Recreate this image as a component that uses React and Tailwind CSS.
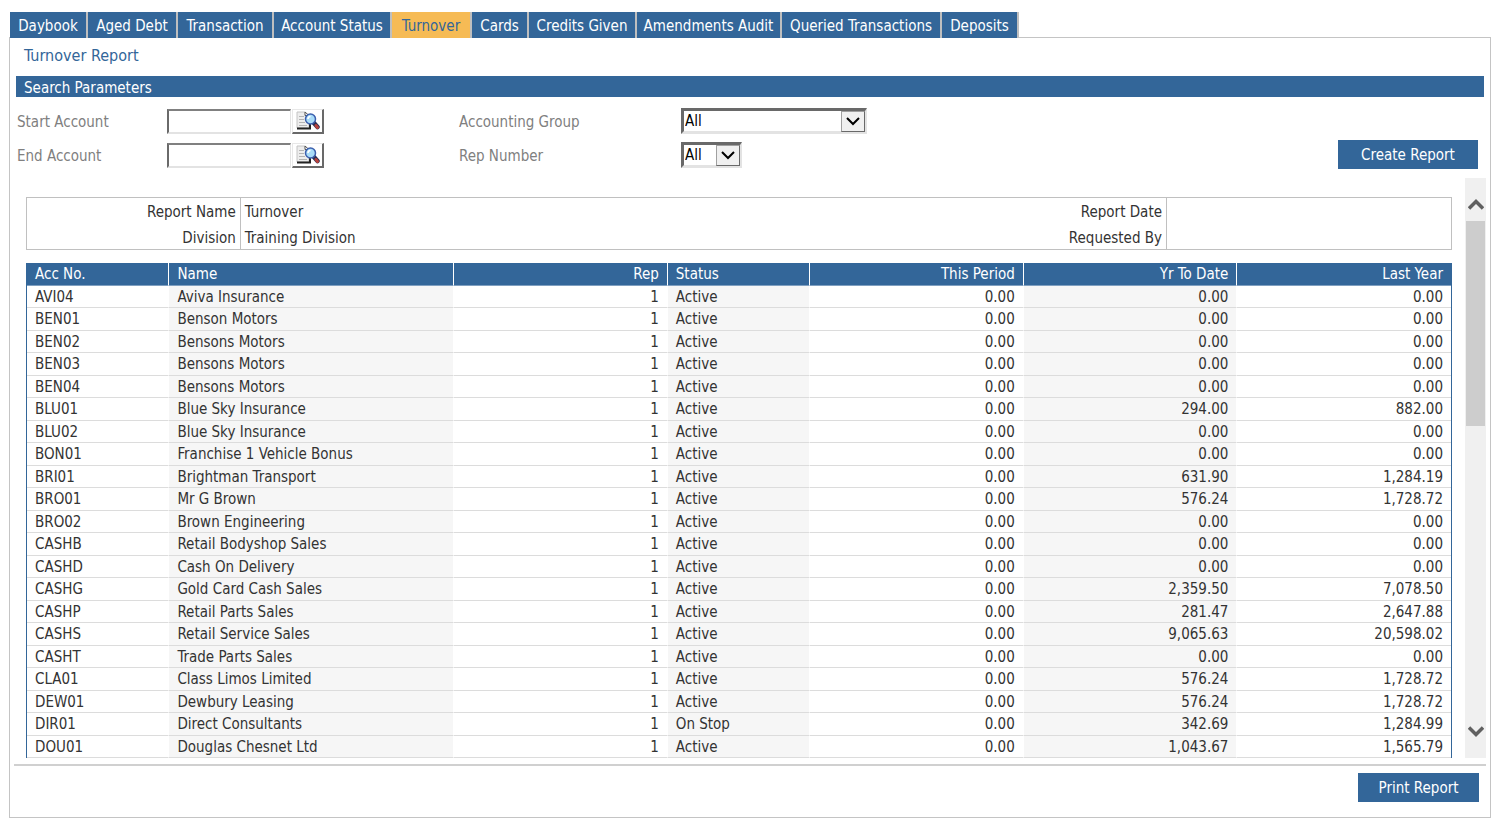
import React from 'react';

const tabs = [
  { label: 'Daybook', width: 'w-[78px]' },
  { label: 'Aged Debt', width: 'w-[90px]' },
  { label: 'Transaction', width: 'w-[96px]' },
  { label: 'Account Status', width: 'w-[118px]' },
  { label: 'Turnover', width: 'w-[80px]', active: true },
  { label: 'Cards', width: 'w-[57px]' },
  { label: 'Credits Given', width: 'w-[108px]' },
  { label: 'Amendments Audit', width: 'w-[145px]' },
  { label: 'Queried Transactions', width: 'w-[160px]' },
  { label: 'Deposits', width: 'w-[77px]' },
];

const columns = [
  { label: 'Acc No.', width: 'w-[10%]' },
  { label: 'Name', width: 'w-[20%]', shaded: true },
  { label: 'Rep', width: 'w-[15%]', numeric: true },
  { label: 'Status', width: 'w-[10%]', shaded: true },
  { label: 'This Period', width: 'w-[15%]', numeric: true },
  { label: 'Yr To Date', width: 'w-[15%]', numeric: true, shaded: true },
  { label: 'Last Year', width: 'w-[15%]', numeric: true },
];

const accounts = [
  ['AVI04', 'Aviva Insurance', '1', 'Active', '0.00', '0.00', '0.00'],
  ['BEN01', 'Benson Motors', '1', 'Active', '0.00', '0.00', '0.00'],
  ['BEN02', 'Bensons Motors', '1', 'Active', '0.00', '0.00', '0.00'],
  ['BEN03', 'Bensons Motors', '1', 'Active', '0.00', '0.00', '0.00'],
  ['BEN04', 'Bensons Motors', '1', 'Active', '0.00', '0.00', '0.00'],
  ['BLU01', 'Blue Sky Insurance', '1', 'Active', '0.00', '294.00', '882.00'],
  ['BLU02', 'Blue Sky Insurance', '1', 'Active', '0.00', '0.00', '0.00'],
  ['BON01', 'Franchise 1 Vehicle Bonus', '1', 'Active', '0.00', '0.00', '0.00'],
  ['BRI01', 'Brightman Transport', '1', 'Active', '0.00', '631.90', '1,284.19'],
  ['BRO01', 'Mr G Brown', '1', 'Active', '0.00', '576.24', '1,728.72'],
  ['BRO02', 'Brown Engineering', '1', 'Active', '0.00', '0.00', '0.00'],
  ['CASHB', 'Retail Bodyshop Sales', '1', 'Active', '0.00', '0.00', '0.00'],
  ['CASHD', 'Cash On Delivery', '1', 'Active', '0.00', '0.00', '0.00'],
  ['CASHG', 'Gold Card Cash Sales', '1', 'Active', '0.00', '2,359.50', '7,078.50'],
  ['CASHP', 'Retail Parts Sales', '1', 'Active', '0.00', '281.47', '2,647.88'],
  ['CASHS', 'Retail Service Sales', '1', 'Active', '0.00', '9,065.63', '20,598.02'],
  ['CASHT', 'Trade Parts Sales', '1', 'Active', '0.00', '0.00', '0.00'],
  ['CLA01', 'Class Limos Limited', '1', 'Active', '0.00', '576.24', '1,728.72'],
  ['DEW01', 'Dewbury Leasing', '1', 'Active', '0.00', '576.24', '1,728.72'],
  ['DIR01', 'Direct Consultants', '1', 'On Stop', '0.00', '342.69', '1,284.99'],
  ['DOU01', 'Douglas Chesnet Ltd', '1', 'Active', '0.00', '1,043.67', '1,565.79'],
];

const LookupIcon = () => (
  <svg width="24" height="20" viewBox="0 0 24 20" aria-hidden="true">
    <path d="M1 1H9L13 5V17H1Z" fill="#ededed" stroke="#c4c4c4" />
    <path d="M1 17.5H14V13" fill="none" stroke="#222" strokeWidth="2" />
    <path d="M9 1V4.5H13Z" fill="#fff" stroke="#555" />
    <path d="M3 5.5H8M3 8.5H8M3 11.5H9M3 14.5H11" stroke="#b4b4b4" />
    <path d="M17.5 11.5L21.5 16" stroke="#2b2f55" strokeWidth="4.5" strokeLinecap="round" />
    <path d="M20 14.5L21.5 16.5" stroke="#b8433c" strokeWidth="3" strokeLinecap="round" />
    <circle cx="14.5" cy="8" r="5" fill="#a9dcf8" stroke="#3c5fae" strokeWidth="1.5" />
    <path d="M12 8A2.5 2.5 0 0 1 14.5 5.5" fill="none" stroke="#fff" strokeWidth="1.5" />
  </svg>
);

const Chevron = ({ up }) => (
  <svg width="16" height="13" viewBox="0 0 16 13" aria-hidden="true">
    <path d={up ? 'M1 10.5L8 3.5L15 10.5' : 'M1 2.5L8 9.5L15 2.5'} fill="none" stroke="#606060" strokeWidth="3.5" />
  </svg>
);

const AccountField = ({ id, label }) => (
  <div className="flex items-center h-[34px]">
    <label htmlFor={id} className="w-[150px] pt-[2px] text-[#808080]">{label}</label>
    <input
      id={id}
      type="text"
      className="w-[124px] h-[25px] mr-px px-1 bg-white border-t-2 border-l-2 border-b-2 border-r border-t-[#808080] border-l-[#6a6a6a] border-b-[#e3e3e3] border-r-[#e3e3e3] outline-none"
    />
    <button
      type="button"
      aria-label={`Look up ${label}`}
      className="w-8 h-[25px] flex items-center justify-center bg-white border-t border-l border-b-2 border-r-2 border-t-[#e8e8e8] border-l-[#e8e8e8] border-b-[#696969] border-r-[#696969]"
    >
      <LookupIcon />
    </button>
  </div>
);

const SelectField = ({ id, label, width }) => (
  <div className="flex items-center h-[34px]">
    <label htmlFor={id} className="w-[222px] pt-[2px] text-[#808080]">{label}</label>
    <div className={`relative ${width}`}>
      <select
        id={id}
        className="appearance-none block w-full h-[26px] pl-px bg-white text-black border-t-3 border-l-3 border-b-3 border-r-2 border-t-[#696969] border-l-[#696969] border-b-[#e3e3e3] border-r-[#e3e3e3] outline-none"
      >
        <option>All</option>
      </select>
      <span className="absolute right-[2px] top-[3px] w-6 h-[21px] flex items-center justify-center bg-[#f0f0f0] border border-t-[#a0a0a0] border-l-[#a0a0a0] border-b-[#696969] border-r-[#696969] pointer-events-none">
        <svg width="14" height="9" viewBox="0 0 14 9" aria-hidden="true">
          <path d="M1 1L7 7L13 1" fill="none" stroke="#000" strokeWidth="2" />
        </svg>
      </span>
    </div>
  </div>
);

const App = () => {
  return (
    <div className="bg-white pt-3 pl-[9px] pr-2 pb-[2px] font-['DejaVu_Sans_Condensed','DejaVu_Sans',sans-serif] text-[15px] leading-5 text-[#333]">
      <nav className="flex pl-px -mb-px relative">
        {tabs.map((tab) => (
          <a
            key={tab.label}
            href="#"
            className={`${tab.width} h-[26px] pt-[2px] flex items-center justify-center whitespace-nowrap border-r-2 border-[#bfbfbf] ${tab.active ? 'bg-[#f6bb55] text-[#336699]' : 'bg-[#336699] text-white'}`}
          >
            {tab.label}
          </a>
        ))}
      </nav>

      <main className="border border-[#c4c4c4] pt-2 pb-[15px]">
        <h1 className="pl-[14px] text-[#336699] text-base leading-5">Turnover Report</h1>

        <h2 className="mt-[10px] mx-[6px] h-[21px] leading-6 pl-2 bg-[#336699] text-white">Search Parameters</h2>

        <form className="flex items-start mt-[7px] pl-[7px] pr-3">
          <div className="w-[442px]">
            <AccountField id="start-account" label="Start Account" />
            <AccountField id="end-account" label="End Account" />
          </div>
          <div>
            <SelectField id="accounting-group" label="Accounting Group" width="w-[186px]" />
            <SelectField id="rep-number" label="Rep Number" width="w-[61px]" />
          </div>
          <button type="button" className="ml-auto mt-9 w-[140px] h-[29px] bg-[#336699] text-white">
            Create Report
          </button>
        </form>

        <div className="flex mt-[6px] ml-4 mr-1">
          <div className="grow min-w-0 mt-[19px]">
            <table className="w-full table-fixed border border-[#c0c0c0] leading-[22px]">
              <tbody>
                <tr className="h-[26px]">
                  <th scope="row" className="w-[15%] pt-[3px] pr-1 text-right font-normal border-r border-[#c0c0c0]">Report Name</th>
                  <td className="w-[50%] pt-[3px] pl-1">Turnover</td>
                  <th scope="row" className="w-[15%] pt-[3px] pr-1 text-right font-normal border-r border-[#c0c0c0]">Report Date</th>
                  <td></td>
                </tr>
                <tr className="h-[26px]">
                  <th scope="row" className="pt-[3px] pr-1 text-right font-normal border-r border-[#c0c0c0]">Division</th>
                  <td className="pt-[3px] pl-1">Training Division</td>
                  <th scope="row" className="pt-[3px] pr-1 text-right font-normal border-r border-[#c0c0c0]">Requested By</th>
                  <td></td>
                </tr>
              </tbody>
            </table>

            <div className="mt-[13px] border-x border-[#336699]">
              <table className="w-full table-fixed border-separate border-spacing-0">
                <thead>
                  <tr className="h-[23px] bg-[#336699] text-white">
                    {columns.map((col) => (
                      <th
                        key={col.label}
                        className={`${col.width} px-2 py-0 font-normal border-b border-b-[#7f9fc0] border-r border-r-white last:border-r-0 ${col.numeric ? 'text-right' : 'text-left'}`}
                      >
                        {col.label}
                      </th>
                    ))}
                  </tr>
                </thead>
                <tbody>
                  {accounts.map((row) => (
                    <tr key={row[0]} className="odd:h-[22px] even:h-[23px]">
                      {row.map((cell, i) => (
                        <td
                          key={columns[i].label}
                          className={`px-2 py-0 border-b border-b-[#dcdcdc] border-r border-r-white last:border-r-0 ${columns[i].numeric ? 'text-right' : 'text-left'} ${columns[i].shaded ? 'bg-[#f6f6f6]' : ''}`}
                        >
                          {cell}
                        </td>
                      ))}
                    </tr>
                  ))}
                </tbody>
              </table>
            </div>
          </div>

          <div className="w-[21px] shrink-0 ml-[13px] flex flex-col items-center bg-[#f0f0f0]">
            <button type="button" aria-label="Scroll up" className="h-[43px] pt-[10px]">
              <Chevron up />
            </button>
            <div className="w-[19px] h-[205px] bg-[#cdcdcd]"></div>
            <button type="button" aria-label="Scroll down" className="mt-auto mb-5">
              <Chevron />
            </button>
          </div>
        </div>

        <div className="mt-[6px] mx-1 pt-[7px] pr-[7px] border-t-2 border-[#d0d0d0] flex justify-end">
          <button type="button" className="w-[121px] h-[29px] bg-[#336699] text-white">
            Print Report
          </button>
        </div>
      </main>
    </div>
  );
};

export default App;
